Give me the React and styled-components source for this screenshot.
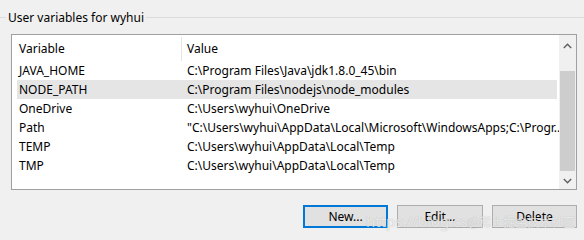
import React from "react";
import styled, { createGlobalStyle } from "styled-components";

const GlobalStyle = createGlobalStyle`
  html, body {
    margin: 0;
    padding: 0;
    background: #f0f0f0;
  }
  body {
    font-family: "Noto Sans", "Open Sans", sans-serif;
    font-size: 12px;
    color: #000;
  }
`;

const Window = styled.div`
  position: relative;
  width: 584px;
  height: 240px;
  overflow: hidden;
  background: #f0f0f0;
`;

const GroupHeader = styled.div`
  display: flex;
  align-items: center;
  height: 33px;
  margin-top: 1px;
`;

const GroupLine = styled.div`
  height: 1px;
  background: #dcdcdc;
  flex: ${props => (props.grow ? 1 : "none")};
  width: ${props => (props.grow ? "auto" : "6px")};
`;

const GroupLabel = styled.span`
  padding: 0 2px;
  white-space: nowrap;
  line-height: 16px;
`;

const ListBox = styled.div`
  margin-left: 11px;
  width: 564px;
  height: 154px;
  border: 1px solid #a0a0a0;
  background: #fff;
  display: flex;
`;

const ListArea = styled.div`
  flex: 1;
  min-width: 0;
  display: flex;
  flex-direction: column;
`;

const HeaderRow = styled.div`
  display: grid;
  grid-template-columns: 169px 1fr;
  height: 26px;
  align-items: center;
`;

const HeaderCell = styled.div`
  padding-left: ${props => (props.divided ? "5px" : "7px")};
  border-left: ${props => (props.divided ? "1px solid #e5e5e5" : "none")};
  height: 24px;
  line-height: 24px;
  margin-top: 2px;
`;

const Row = styled.div`
  display: grid;
  grid-template-columns: 168px 1fr;
  height: 19px;
  line-height: 19px;
  margin: 0 2px 0 5px;
  background: ${props => (props.selected ? "#e5e5e5" : "transparent")};
`;

const Cell = styled.div`
  padding-left: 2px;
  white-space: nowrap;
`;

const ScrollBar = styled.div`
  width: 17px;
  background: #f0f0f0;
  display: flex;
  flex-direction: column;
  align-items: center;
`;

const ArrowButton = styled.div`
  height: ${props => props.h}px;
  width: 17px;
  display: flex;
  align-items: center;
  justify-content: center;
`;

const Thumb = styled.div`
  width: 15px;
  height: 100px;
  margin-top: 14px;
  background: #cdcdcd;
`;

const Spacer = styled.div`
  flex: 1;
`;

const ButtonRow = styled.div`
  display: flex;
  justify-content: flex-end;
  gap: 9px;
  margin-top: 15px;
  padding-right: 7px;
`;

const Button = styled.button`
  width: ${props => props.w}px;
  height: 23px;
  font-family: "Noto Sans", "Open Sans", sans-serif;
  font-size: 12px;
  color: #000;
  background: #e1e1e1;
  border: ${props => (props.primary ? "2px solid #0078d7" : "1px solid #adadad")};
  padding: 0;
  box-sizing: border-box;
`;

const Watermark = styled.div`
  position: absolute;
  top: ${props => props.top}px;
  left: ${props => props.left}px;
  font-family: ${props =>
    props.cjk
      ? '"Noto Sans CJK SC", sans-serif'
      : '"Noto Sans", sans-serif'};
  font-size: ${props => props.size}px;
  line-height: 1;
  color: rgba(255, 255, 255, 0.7);
  text-shadow: 0 0 1px rgba(130, 130, 130, 0.55);
  white-space: nowrap;
  pointer-events: none;
`;

const Chevron = ({ up }) => (
  <svg width="9" height="6" viewBox="0 0 9 6">
    <path
      d={up ? "M0.8 5 L4.5 1.3 L8.2 5" : "M0.8 1 L4.5 4.7 L8.2 1"}
      fill="none"
      stroke="#606060"
      strokeWidth="1.4"
    />
  </svg>
);

const rows = [
  ["JAVA_HOME", "C:\\Program Files\\Java\\jdk1.8.0_45\\bin"],
  ["NODE_PATH", "C:\\Program Files\\nodejs\\node_modules"],
  ["OneDrive", "C:\\Users\\wyhui\\OneDrive"],
  ["Path", "\"C:\\Users\\wyhui\\AppData\\Local\\Microsoft\\WindowsApps;C:\\Progr..."],
  ["TEMP", "C:\\Users\\wyhui\\AppData\\Local\\Temp"],
  ["TMP", "C:\\Users\\wyhui\\AppData\\Local\\Temp"],
];

export default function App() {
  return (
    <Window>
      <GlobalStyle />
      <GroupHeader>
        <GroupLine />
        <GroupLabel>User variables for wyhui</GroupLabel>
        <GroupLine grow />
      </GroupHeader>
      <ListBox>
        <ListArea>
          <HeaderRow>
            <HeaderCell>Variable</HeaderCell>
            <HeaderCell divided>Value</HeaderCell>
          </HeaderRow>
          {rows.map(([name, value], i) => (
            <Row key={name} selected={i === 1}>
              <Cell>{name}</Cell>
              <Cell>{value}</Cell>
            </Row>
          ))}
        </ListArea>
        <ScrollBar>
          <ArrowButton h={22}>
            <Chevron up />
          </ArrowButton>
          <Thumb />
          <Spacer />
          <ArrowButton h={17}>
            <Chevron />
          </ArrowButton>
        </ScrollBar>
      </ListBox>
      <ButtonRow>
        <Button primary w={85}>New...</Button>
        <Button w={86}>Edit...</Button>
        <Button w={85}>Delete</Button>
      </ButtonRow>
      <Watermark top={214} left={366} size={15}>https://blog.csd</Watermark>
      <Watermark cjk top={216} left={468} size={12}>@稀土掘金技术社区</Watermark>
    </Window>
  );
}
